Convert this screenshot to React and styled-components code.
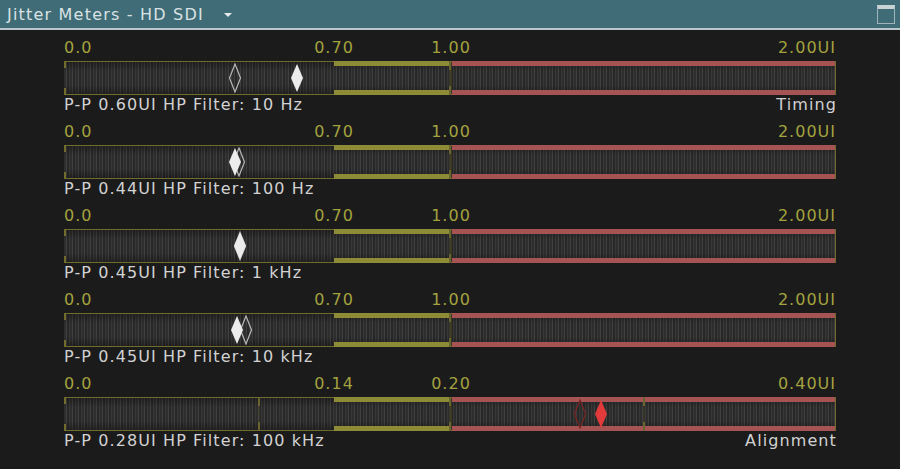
import React from 'react';
import styled, { createGlobalStyle } from 'styled-components';

const Global = createGlobalStyle`
  html, body {
    margin: 0;
    padding: 0;
    background: #1b1b1b;
  }
  body {
    font-family: "DejaVu Sans", Verdana, sans-serif;
  }
`

const Panel = styled.div`
  width: 900px;
  height: 469px;
  display: flex;
  flex-direction: column;
  background: #1b1b1b;
  overflow: hidden;
`

const TitleBar = styled.div`
  height: 28px;
  display: flex;
  align-items: center;
  padding: 0 5px 0 7px;
  background: #3f6c76;
  border-bottom: 2px solid #b9c6ca;
`

const Title = styled.span`
  color: #d9e2e4;
  font-size: 16px;
  letter-spacing: 1.2px;
`

const Caret = styled.span`
  margin-left: 20px;
  width: 0;
  height: 0;
  border-left: 4px solid transparent;
  border-right: 4px solid transparent;
  border-top: 4px solid #e6ecee;
  margin-top: 1px;
`

const WinIcon = styled.span`
  margin-left: auto;
  width: 16px;
  height: 14px;
  border: 1px solid #9fb5bb;
  border-top: 4px solid #c9d3d6;
`

const Body = styled.div`
  padding: 8px 0 0 64px;
  display: flex;
  flex-direction: column;
  gap: 7px;
`

const Meter = styled.div`
  width: 772px;
  display: flex;
  flex-direction: column;
`

const ScaleRow = styled.div`
  height: 20px;
  display: flex;
  margin-bottom: 3px;
  color: #a4a23f;
  font-size: 16px;
  letter-spacing: 1px;
  line-height: 20px;
`

const ScaleCell = styled.div`
  width: ${p => p.$w}px;
  display: flex;
  justify-content: ${p => p.$align || 'flex-start'};
  margin-right: ${p => (p.$align === 'flex-end' ? '-1px' : '0')};
`

const ScaleMark = styled.div`
  width: 0;
  display: flex;
  justify-content: center;
  white-space: nowrap;
`

const Bar = styled.div`
  position: relative;
  height: 34px;
  display: flex;
  border-right: 1px solid #6f6a2c;
  background:
    linear-gradient(180deg, rgba(0,0,0,0.35) 0%, rgba(0,0,0,0) 30%, rgba(0,0,0,0) 70%, rgba(0,0,0,0.35) 100%),
    repeating-linear-gradient(90deg, #2e2e2e 0px, #2e2e2e 2px, #404040 2px, #404040 3px, #282828 3px, #282828 5px, #383838 5px, #383838 6px);
`

const Segment = styled.div`
  position: relative;
  width: ${p => p.$w}px;
  border-top: ${p => (p.$band ? `5px solid ${p.$band}` : '1px solid #6f6c2c')};
  border-bottom: ${p => (p.$band ? `5px solid ${p.$band}` : '1px solid #6f6c2c')};
`

const Bracket = styled.div`
  position: absolute;
  left: 0;
  top: 0;
  bottom: 0;
  width: 2px;
  background: linear-gradient(180deg, #6f6c2c 0, #6f6c2c 6px, transparent 6px, transparent calc(100% - 6px), #6f6c2c calc(100% - 6px));
`

const Tick = styled.div`
  position: absolute;
  left: ${p => p.$x}px;
  top: 0;
  bottom: 0;
  width: 2px;
  background: linear-gradient(180deg, #6a6530 0, #6a6530 9px, rgba(90,85,40,0.25) 9px, rgba(90,85,40,0.25) calc(100% - 9px), #6a6530 calc(100% - 9px));
`

const Marker = styled.svg`
  position: absolute;
  top: 2px;
  width: 14px;
  height: 30px;
  margin-left: -7px;
`

const InfoRow = styled.div`
  height: 20px;
  display: flex;
  justify-content: space-between;
  color: #d2d2d2;
  font-size: 16px;
  letter-spacing: 1.1px;
  line-height: 20px;
  margin-right: -1px;
`

function Diamond({ x, color, hollow }) {
  return (
    <Marker viewBox="0 0 14 30" style={{ left: x }}>
      {hollow ? (
        <path d="M7 1 L12.5 15 L7 29 L1.5 15 Z" fill="none" stroke={color} strokeWidth="1.2" />
      ) : (
        <path d="M7 1 L13 15 L7 29 L1 15 Z" fill={color} />
      )}
    </Marker>
  );
}

const YELLOW = '#8d8b36';
const RED = '#a65453';

const meters = [
  {
    labels: ['0.70', '1.00', '2.00UI'],
    info: 'P-P 0.60UI HP Filter: 10 Hz',
    side: 'Timing',
    markers: [
      { x: 171, color: '#b8b8b8', hollow: true },
      { x: 233, color: '#ececec' },
    ],
  },
  {
    labels: ['0.70', '1.00', '2.00UI'],
    info: 'P-P 0.44UI HP Filter: 100 Hz',
    markers: [
      { x: 175, color: '#b8b8b8', hollow: true },
      { x: 171, color: '#ececec' },
    ],
  },
  {
    labels: ['0.70', '1.00', '2.00UI'],
    info: 'P-P 0.45UI HP Filter: 1 kHz',
    markers: [
      { x: 176, color: '#9a9a9a', hollow: true },
      { x: 176, color: '#ececec' },
    ],
  },
  {
    labels: ['0.70', '1.00', '2.00UI'],
    info: 'P-P 0.45UI HP Filter: 10 kHz',
    markers: [
      { x: 182, color: '#b8b8b8', hollow: true },
      { x: 173, color: '#ececec' },
    ],
  },
  {
    labels: ['0.14', '0.20', '0.40UI'],
    info: 'P-P 0.28UI HP Filter: 100 kHz',
    side: 'Alignment',
    ticks: [194, 579],
    markers: [
      { x: 516, color: '#7a2424', hollow: true },
      { x: 537, color: '#e2393b' },
    ],
  },
];

function JitterMeter({ m }) {
  return (
    <Meter>
      <ScaleRow>
        <ScaleCell $w={270}>0.0</ScaleCell>
        <ScaleMark>{m.labels[0]}</ScaleMark>
        <ScaleCell $w={117} />
        <ScaleMark>{m.labels[1]}</ScaleMark>
        <ScaleCell $w={385} $align="flex-end">{m.labels[2]}</ScaleCell>
      </ScaleRow>
      <Bar>
        <Segment $w={270}>
          <Bracket />
        </Segment>
        <Segment $w={116} $band={YELLOW} />
        <Segment $w={2} style={{ background: '#3a3722' }} />
        <Segment $w={383} $band={RED} />
        <Tick $x={385} />
        {(m.ticks || []).map(t => <Tick key={t} $x={t} />)}
        {m.markers.map((mk, i) => (
          <Diamond key={i} {...mk} />
        ))}
      </Bar>
      <InfoRow>
        <span>{m.info}</span>
        <span>{m.side}</span>
      </InfoRow>
    </Meter>
  );
}

export default function App() {
  return (
    <Panel>
      <Global />
      <TitleBar>
        <Title>Jitter Meters - HD SDI</Title>
        <Caret />
        <WinIcon />
      </TitleBar>
      <Body>
        {meters.map((m, i) => (
          <JitterMeter key={i} m={m} />
        ))}
      </Body>
    </Panel>
  );
}
